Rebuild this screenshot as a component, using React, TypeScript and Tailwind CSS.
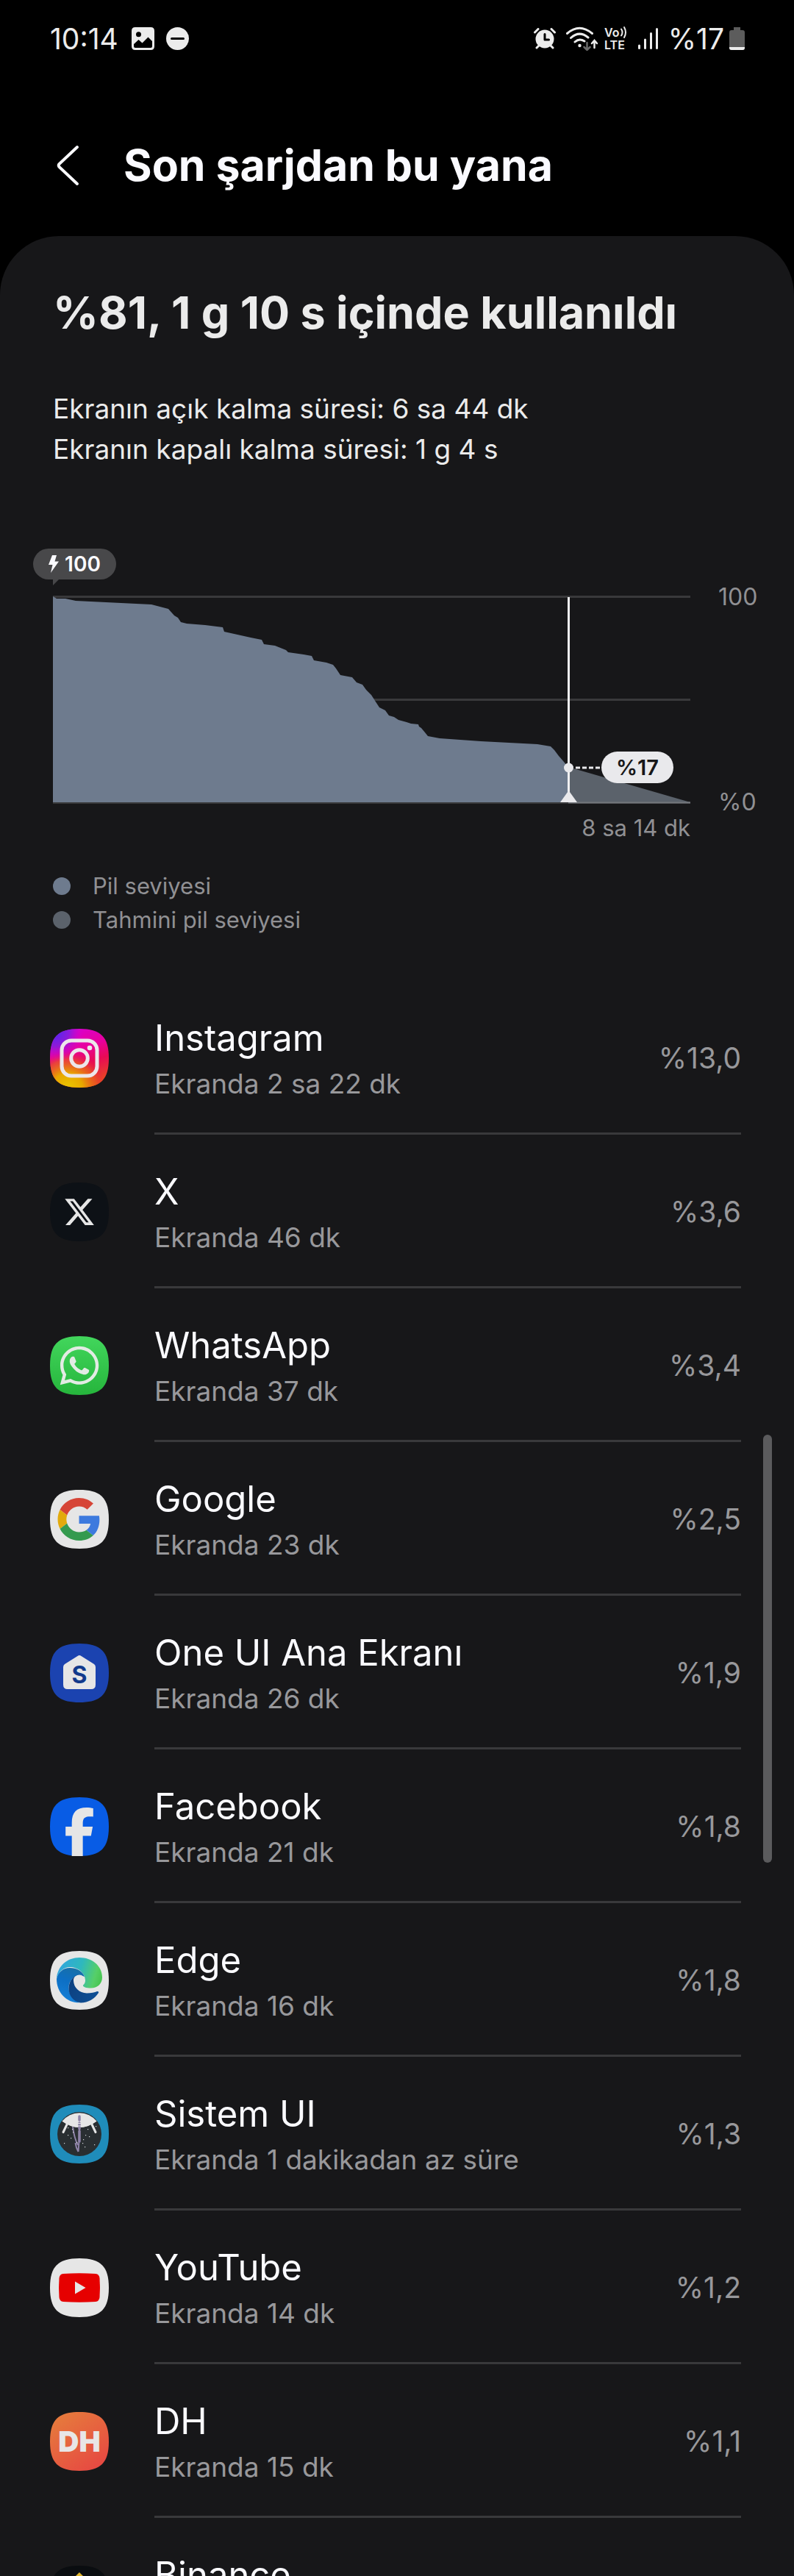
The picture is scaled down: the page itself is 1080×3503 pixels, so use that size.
import React from 'react';
import { FaFacebookF, FaWhatsapp, FaXTwitter } from 'react-icons/fa6';
import { SiBinance } from 'react-icons/si';

interface AppUsage {
    name: string;
    usage: string;
    percent: string;
    icon: React.ReactNode;
}

// Points of the battery curve, in the chart's own 867 x 283 space
const LEVEL_POINTS = [
    '0,1', '5,4', '17,4', '31,7', '134,12', '157,18', '165,27', '170,30', '174,36', '182,38', '207,40', '231,43',
    '233,49', '269,57', '284,60', '287,66', '302,68', '317,74', '320,77', '341,80', '352,82', '355,88', '372,91',
    '381,94', '385,99', '391,108', '407,111', '413,118', '421,121', '426,128', '433,135', '444,152', '452,156',
    '457,163', '464,165', '470,169', '481,172', '487,174', '497,175', '498,178', '501,180', '506,186', '510,191',
    '526,194', '582,198', '659,202', '677,205', '682,210', '688,218', '701,233', '701,281', '0,281',
].join(' ');

const SQUIRCLE = 'M40 0C69 0 80 11 80 40S69 80 40 80 0 69 0 40 11 0 40 0Z';

const AppIcon: React.FC<{ fill: string, children?: React.ReactNode }> = ({ fill, children }) => (
    <svg viewBox="0 0 80 80" className="size-20 shrink-0" aria-hidden="true">
        <path d={SQUIRCLE} fill={fill} />
        {children}
    </svg>
);

const InstagramIcon = () => (
    <AppIcon fill="url(#ig-base)">
        <defs>
            <linearGradient id="ig-base" x1="0.2" y1="0" x2="0.55" y2="1">
                <stop offset="0" stopColor="#d800d6" />
                <stop offset="0.4" stopColor="#e8009c" />
                <stop offset="0.65" stopColor="#e80a55" />
                <stop offset="1" stopColor="#e84a20" />
            </linearGradient>
            <radialGradient id="ig-warm" cx="0.3" cy="1.02" r="0.65">
                <stop offset="0" stopColor="#e8c800" />
                <stop offset="0.4" stopColor="#e8a800" />
                <stop offset="0.75" stopColor="#ea5a20" stopOpacity="0.7" />
                <stop offset="1" stopColor="#e80a55" stopOpacity="0" />
            </radialGradient>
            <radialGradient id="ig-cool" cx="0.08" cy="0.05" r="0.5">
                <stop offset="0" stopColor="#4a28f0" />
                <stop offset="0.5" stopColor="#7a20e0" stopOpacity="0.8" />
                <stop offset="1" stopColor="#d800d6" stopOpacity="0" />
            </radialGradient>
        </defs>
        <path d={SQUIRCLE} fill="url(#ig-warm)" />
        <path d={SQUIRCLE} fill="url(#ig-cool)" />
        <g fill="none" stroke="#ece6ea" strokeWidth="5">
            <rect x="16" y="16" width="48" height="48" rx="13" />
            <circle cx="40" cy="40" r="11.3" />
        </g>
        <circle cx="54" cy="26" r="3.3" fill="#ece6ea" />
    </AppIcon>
);

const GoogleIcon = () => (
    <AppIcon fill="#e6e6e6">
        <g transform="translate(10.5 11) scale(1.21)">
            <path fill="#d64537" d="M24 9.5c3.54 0 6.71 1.22 9.21 3.6l6.85-6.85C35.9 2.38 30.47 0 24 0 14.62 0 6.51 5.38 2.56 13.22l7.98 6.19C12.43 13.72 17.74 9.5 24 9.5z" />
            <path fill="#3d7ade" d="M46.98 24.55c0-1.57-.15-3.09-.38-4.55H24v9.02h12.94c-.58 2.96-2.26 5.48-4.78 7.18l7.73 6c4.51-4.18 7.09-10.36 7.09-17.65z" />
            <path fill="#e2aa0d" d="M10.53 28.59c-.48-1.45-.76-2.99-.76-4.59s.27-3.14.76-4.59l-7.98-6.19C.92 16.46 0 20.12 0 24c0 3.88.92 7.54 2.56 10.78l7.97-6.19z" />
            <path fill="#349a4f" d="M24 48c6.48 0 11.93-2.13 15.89-5.81l-7.73-6c-2.15 1.45-4.92 2.3-8.16 2.3-6.26 0-11.57-4.22-13.47-9.91l-7.98 6.19C6.51 42.62 14.62 48 24 48z" />
        </g>
    </AppIcon>
);

const EdgeIcon = () => (
    <AppIcon fill="#e6e6e6">
        <defs>
            <linearGradient id="edge-top" x1="0" y1="0.4" x2="1" y2="0.6">
                <stop offset="0" stopColor="#30a5de" />
                <stop offset="0.5" stopColor="#2fb8bd" />
                <stop offset="0.85" stopColor="#56cf68" />
                <stop offset="1" stopColor="#48c552" />
            </linearGradient>
            <linearGradient id="edge-left" x1="0.6" y1="0" x2="0.3" y2="1">
                <stop offset="0" stopColor="#176fa8" />
                <stop offset="0.4" stopColor="#0d6fc4" />
                <stop offset="1" stopColor="#1580d8" />
            </linearGradient>
            <linearGradient id="edge-low" x1="0" y1="0.2" x2="1" y2="0.6">
                <stop offset="0" stopColor="#0c4080" />
                <stop offset="1" stopColor="#0f4f94" />
            </linearGradient>
        </defs>
        <path fill="url(#edge-top)" d="M9 38C10 20 24 9 40 9c17 0 31 11 31 27 0 9-7 14.500-15 14.500-7 0-11.500-1.500-11-4 2-1.500 3-3.500 3-6.500C48 30 38 22 27 22 18 22 11 29 9 38Z" />
        <path fill="url(#edge-left)" d="M9 38c2-9 9-15 18-15 9 0 17 4 20 12l-7-2c-8 0-14.500 8-14.500 17 0 10 7.500 18 16.500 20.300C23 71.500 9 57 9 38Z" />
        <path fill="url(#edge-low)" d="M40 32c-5 0-8 4-8 8 0 10 8 17 18 17.500 6 0 11-1 14-2.500 2-.5 2.500 1 2 2-5 8-14 13.400-24 13.400C31 69 25.500 60 25.500 51 25.500 41 32 33 40 32Z" />
        <circle cx="40" cy="40" r="7.500" fill="#e6e6e6" />
    </AppIcon>
);

const STARS = [[24, 31], [30, 33], [24, 41], [28, 45], [31, 37], [36, 51], [19, 52], [44, 52], [47, 57], [53, 43], [45, 47], [60, 54], [48, 41], [62, 29], [51, 33]];

const SystemIcon = () => (
    <AppIcon fill="#1f8cba">
        <circle cx="40" cy="40" r="30" fill="#292e31" />
        <path d="M16.500 22.500A30 30 0 0 1 63.500 22.500Q52 31 40 31T16.500 22.500Z" fill="#e6e6e6" />
        <path d="M16.500 22.500Q28 31 40 31T63.500 22.500Z" fill="#e6e6e6" />
        <path d="M23 27l-5 10.500M57 27l5 10.500" stroke="#e6e6e6" strokeWidth="3" strokeLinecap="round" />
        <path d="M31 30q2 16 7 25M40 32q0 14-1.500 32M38.500 64q-3-5-4-12" stroke="#8f83a8" fill="none" strokeWidth="2" />
        <path d="M40 16v5M40 25v8M40 36v14" stroke="#8f83a8" strokeWidth="3.500" strokeLinecap="round" />
        <path d="M38 25.500h4M38 29h4" stroke="#e6e6e6" />
        {STARS.map(([x, y]) => <rect key={`${x}-${y}`} x={x} y={y} width="1.200" height="1.200" fill="#d6d9db" />)}
    </AppIcon>
);

const apps: AppUsage[] = [
    { name: 'Instagram', usage: 'Ekranda 2 sa 22 dk', percent: '%13,0', icon: <InstagramIcon /> },
    {
        name: 'X', usage: 'Ekranda 46 dk', percent: '%3,6',
        icon: <AppIcon fill="#0d1116"><FaXTwitter x={18} y={18} size={44} color="#e6e6e6" /></AppIcon>,
    },
    {
        name: 'WhatsApp', usage: 'Ekranda 37 dk', percent: '%3,4',
        icon: (
            <AppIcon fill="url(#wa-bg)">
                <defs>
                    <linearGradient id="wa-bg" x1="0" y1="0" x2="0" y2="1">
                        <stop offset="0" stopColor="#42d65c" />
                        <stop offset="1" stopColor="#26b53c" />
                    </linearGradient>
                </defs>
                <FaWhatsapp x={10} y={10} size={60} color="#e3ebe4" />
            </AppIcon>
        ),
    },
    { name: 'Google', usage: 'Ekranda 23 dk', percent: '%2,5', icon: <GoogleIcon /> },
    {
        name: 'One UI Ana Ekranı', usage: 'Ekranda 26 dk', percent: '%1,9',
        icon: (
            <AppIcon fill="#1b43b0">
                <path d="M37.500 17Q40 15 42.500 17L60 28Q62 29.500 62 32V56Q62 62 56 62H24Q18 62 18 56V32Q18 29.500 20 28Z" fill="#e6e6e6" />
                <text x="40" y="54" textAnchor="middle" className="font-bold text-[32px]" fill="#123a8c">S</text>
            </AppIcon>
        ),
    },
    {
        name: 'Facebook', usage: 'Ekranda 21 dk', percent: '%1,8',
        icon: <AppIcon fill="#085ce5"><FaFacebookF x={7} y={14} size={66} color="#e6e6e6" /></AppIcon>,
    },
    { name: 'Edge', usage: 'Ekranda 16 dk', percent: '%1,8', icon: <EdgeIcon /> },
    { name: 'Sistem UI', usage: 'Ekranda 1 dakikadan az süre', percent: '%1,3', icon: <SystemIcon /> },
    {
        name: 'YouTube', usage: 'Ekranda 14 dk', percent: '%1,2',
        icon: (
            <AppIcon fill="#e6e6e6">
                <path d="M18 21Q40 19.500 62 21 67 21.500 67.500 27 68.500 40 67.500 53 67 58.500 62 59 40 60.500 18 59 13 58.500 12.500 53 11.500 40 12.500 27 13 21.500 18 21Z" fill="#e60000" />
                <path d="M34 31.500 48.500 40 34 48.500Z" fill="#e6e6e6" />
            </AppIcon>
        ),
    },
    {
        name: 'DH', usage: 'Ekranda 15 dk', percent: '%1,1',
        icon: (
            <AppIcon fill="url(#dh-bg)">
                <defs>
                    <linearGradient id="dh-bg" x1="0.1" y1="0" x2="0.8" y2="1">
                        <stop offset="0" stopColor="#e67d3c" />
                        <stop offset="1" stopColor="#e64842" />
                    </linearGradient>
                </defs>
                <text x="40" y="54" textAnchor="middle" className="font-black text-[39px]" fill="#e8e6e6">DH</text>
            </AppIcon>
        ),
    },
    {
        name: 'Binance', usage: 'Ekranda 9 dk', percent: '%1,0',
        icon: <AppIcon fill="#0a0d10"><SiBinance x={9} y={9} size={62} color="#dfb42a" /></AppIcon>,
    },
];

const StatusBar = () => (
    <div className="flex h-[104px] items-center justify-between pr-[67px] pl-[68px] text-[39px] leading-none text-[#ececec]">
        <div className="flex items-center">
            <span>10:14</span>
            <svg viewBox="0 0 31 31" className="ml-[18px] size-[31px]" aria-hidden="true">
                <path fillRule="evenodd" fill="#ececec" d="M5 0H26Q31 0 31 5V26Q31 31 26 31H5Q0 31 0 26V5Q0 0 5 0ZM9.500 6.200A3.500 3.500 0 1 0 9.500 13.200 3.500 3.500 0 1 0 9.500 6.200ZM3 23V26Q3 28 5 28H26Q28 28 28 26V19L22.500 13.500 14.500 21.500 9.500 17Z" />
            </svg>
            <svg viewBox="0 0 31 31" className="ml-4 size-[31px]" aria-hidden="true">
                <circle cx="15.500" cy="15.500" r="15.500" fill="#ececec" />
                <path d="M7.500 15.500H23.500" stroke="#000" strokeWidth="3" strokeLinecap="round" />
            </svg>
        </div>
        <div className="flex items-center">
            <svg viewBox="0 0 30 29" className="h-[29px] w-[30px]" aria-hidden="true">
                <circle cx="15" cy="15" r="12.500" fill="#ececec" />
                <path d="M1.500 6 6 1.500M28.500 6 24 1.500M7 24 4 27M23 24 26 27" stroke="#ececec" strokeWidth="3" strokeLinecap="round" />
                <path d="M15 8.500V16H20.500" stroke="#000" strokeWidth="3" fill="none" strokeLinecap="round" strokeLinejoin="round" />
            </svg>
            <svg viewBox="0 0 43 33" className="ml-[14px] h-[33px] w-[43px]" aria-hidden="true">
                <g fill="none" stroke="#ececec" strokeWidth="3" strokeLinecap="round">
                    <path d="M1.500 9.500Q18 -5 35.500 9.500M6.500 15.500Q18 5 30 15M12 21Q18 15.500 25 20" />
                    <path d="M38.500 29V19M35 23 38.500 19 42 23" strokeWidth="2.500" />
                    <path d="M28.500 22V32M24.500 28 28.500 32 32.500 28" stroke="#6a6a6a" strokeWidth="2.500" />
                </g>
                <circle cx="18.500" cy="26" r="2.200" fill="#ececec" />
            </svg>
            <svg viewBox="0 0 34 44" className="ml-[9px] h-11 w-[34px] overflow-visible" fill="#ececec" aria-hidden="true">
                <text x="0" y="20" className="text-[16px] font-semibold">Vo</text>
                <text x="0" y="37" className="text-[16px] font-semibold">LTE</text>
                <path d="M23 9.500Q26 14 23 18.500M27 7Q31 14 27 21" fill="none" stroke="#ececec" strokeWidth="2" strokeLinecap="round" />
            </svg>
            <svg viewBox="0 0 27 29" className="ml-3 h-[29px] w-[27px]" aria-hidden="true">
                <path d="M1.500 24V27.500M9.500 16V27.500M17.500 7.500V27.500M25.500 1.500V27.500" stroke="#ececec" strokeWidth="3" strokeLinecap="round" />
            </svg>
            <span className="ml-[14px]">%17</span>
            <svg viewBox="0 0 21 31" className="ml-[7px] h-[31px] w-[21px]" aria-hidden="true">
                <path d="M6 0H15V4H18Q21 4 21 7V28Q21 31 18 31H3Q0 31 0 28V7Q0 4 3 4H6Z" fill="#5c5c5c" />
                <path d="M0 27H21V28Q21 31 18 31H3Q0 31 0 28Z" fill="#ececec" />
            </svg>
        </div>
    </div>
);

const BatteryChart = () => (
    <section className="mt-[108px] pr-[45px] pl-[72px] text-[31px] text-[#909093]">
        <div className="relative -ml-[27px] flex h-[42px] w-[113px] items-center justify-center gap-2 rounded-full bg-[#48484a] text-[28px] leading-none font-semibold text-[#fafaff]">
            <svg viewBox="0 0 14 24" className="h-6 w-[14px]" aria-hidden="true">
                <path d="M5 0H11L8.500 8.500H14L3 24 5.500 13H0Z" fill="#fafaff" />
            </svg>
            100
            <svg viewBox="0 0 8 8" className="absolute top-full left-[27px] size-2" aria-hidden="true">
                <path d="M0 0H8L0 8Z" fill="#48484a" />
            </svg>
        </div>
        <div className="mt-[22px] flex gap-[38px]">
            <div className="flex-1">
                <svg viewBox="0 0 867 283" className="block w-full" role="img" aria-label="Pil seviyesi">
                    <path d="M0 1.500H867M0 141.500H867M0 281.500H867" stroke="#39393b" strokeWidth="3" />
                    <polygon points={LEVEL_POINTS} fill="#6e7b8e" />
                    <polygon points="701,233 867,281 701,281" fill="#5b626b" />
                    <path d="M701 281.500H867" stroke="#74777c" strokeWidth="2" />
                    <path d="M701.500 2V281" stroke="#f0f0f2" strokeWidth="3" />
                    <path d="M711 234H746" stroke="#e9e9ec" strokeWidth="3" strokeDasharray="6 3" />
                    <circle cx="701.500" cy="234" r="6.500" fill="#e9e9ec" />
                    <path d="M701.500 265 713 281H690Z" fill="#e9e9ec" />
                    <rect x="746" y="212" width="98" height="43" rx="21.500" fill="#e9e9ec" />
                    <text x="795" y="244" textAnchor="middle" className="text-[29px] font-semibold" fill="#171719">%17</text>
                </svg>
                <p className="mt-[11px] text-right leading-[44px]">8 sa 14 dk</p>
            </div>
            <div className="-mt-[18px] mb-[37px] flex w-[58px] flex-col justify-between text-[32px] leading-10">
                <span>100</span>
                <span>%0</span>
            </div>
        </div>
        <ul className="mt-[34px] leading-[46px]">
            <li className="flex items-center gap-[30px]"><span className="size-6 rounded-full bg-[#6e7b8e]" />Pil seviyesi</li>
            <li className="flex items-center gap-[30px]"><span className="size-6 rounded-full bg-[#5b626b]" />Tahmini pil seviyesi</li>
        </ul>
    </section>
);

const AppRow: React.FC<{ app: AppUsage }> = ({ app }) => (
    <li className="flex h-[209px] items-stretch gap-[62px] pr-[72px] pl-[68px]">
        <div className="flex items-center">{app.icon}</div>
        <div className="flex flex-1 items-center justify-between border-b-[3px] border-[#39393b]">
            <div>
                <h2 className="text-[49px] leading-[74px] text-[#fafaff]">{app.name}</h2>
                <p className="text-[37px] leading-[50px] text-[#98989b]">{app.usage}</p>
            </div>
            <span className="pt-1 text-[39px] leading-[50px] text-[#98989b]">{app.percent}</span>
        </div>
    </li>
);

const App: React.FC = () => {
    return (
        <div className="flex h-screen flex-col bg-black font-['Inter',sans-serif]">
            <StatusBar />
            <header className="flex items-center gap-[60px] pt-[81px] pb-14 pl-[76px]">
                <button type="button" aria-label="Geri" className="shrink-0">
                    <svg viewBox="0 0 32 56" className="h-14 w-8" fill="none">
                        <path d="M29 3 4.500 26Q3 28 4.500 30L29 53" stroke="#fafaff" strokeWidth="4" strokeLinecap="round" />
                    </svg>
                </button>
                <h1 className="text-[59px] leading-[80px] font-bold text-[#fafaff]">Son şarjdan bu yana</h1>
            </header>
            <main className="relative min-h-0 flex-1 overflow-hidden rounded-t-[80px] bg-[#171719]">
                <div className="h-full overflow-y-auto [scrollbar-width:none]">
                    <div className="px-[72px] pt-16 text-[#ebebeb]">
                        <h2 className="text-[61px] leading-[80px] font-bold">%81, 1 g 10 s içinde kullanıldı</h2>
                        <div className="mt-[63px] text-[37px] leading-[55px]">
                            <p>Ekranın açık kalma süresi: 6 sa 44 dk</p>
                            <p>Ekranın kapalı kalma süresi: 1 g 4 s</p>
                        </div>
                    </div>
                    <BatteryChart />
                    <ul className="mt-[60px]">
                        {apps.map(app => <AppRow key={app.name} app={app} />)}
                    </ul>
                </div>
                <div className="absolute top-[1630px] right-[30px] h-[582px] w-3 rounded-full bg-[#5b5b5d]" />
            </main>
        </div>
    );
};

export default App;
